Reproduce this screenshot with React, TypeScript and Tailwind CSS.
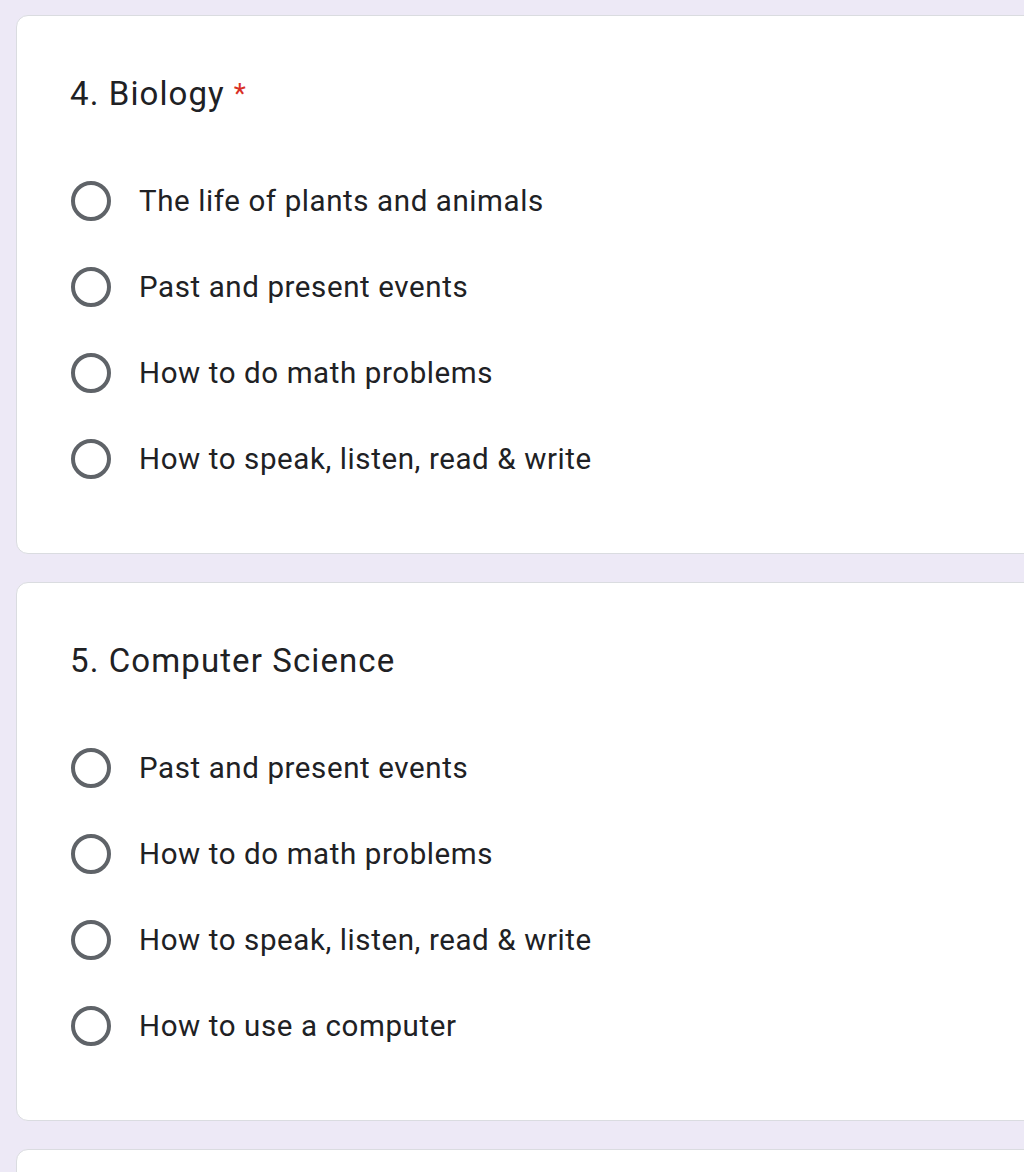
const questions = [
  {
    title: '4. Biology',
    required: true,
    options: [
      'The life of plants and animals',
      'Past and present events',
      'How to do math problems',
      'How to speak, listen, read & write',
    ],
  },
  {
    title: '5. Computer Science',
    required: false,
    options: [
      'Past and present events',
      'How to do math problems',
      'How to speak, listen, read & write',
      'How to use a computer',
    ],
  },
]

function Radio() {
  return (
    <span className="flex h-[42px] w-[42px] shrink-0 items-center justify-center">
      <span className="block h-[40px] w-[40px] rounded-full border-[4px] border-[#5f6368]" />
    </span>
  )
}

function QuestionCard({ title, required, options }: { title: string; required: boolean; options: string[] }) {
  return (
    <div className="-mr-4 ml-4 rounded-[12px] border border-[#dadce0] bg-white pb-[73px] pl-[53px] pt-[59px]">
      <div className="flex items-start text-[33px] leading-[38px] tracking-[1.1px] text-[#202124]">
        <span>{title}</span>
        {required && <span className="ml-[9px] text-[28px] text-[#d93025]">*</span>}
      </div>
      <div className="mt-[67px] flex flex-col gap-[44px]">
        {options.map((opt) => (
          <label key={opt} className="flex items-center gap-[27px]">
            <Radio />
            <span className="text-[29.5px] leading-[42px] tracking-[0.6px] text-[#202124]">{opt}</span>
          </label>
        ))}
      </div>
    </div>
  )
}

export default function App() {
  return (
    <div
      className="flex h-[1172px] flex-col gap-[28px] overflow-hidden bg-[#ede9f6] pt-[15px]"
      style={{ fontFamily: 'Roboto, "Liberation Sans", sans-serif' }}
    >
      {questions.map((q) => (
        <QuestionCard key={q.title} {...q} />
      ))}
      <div className="-mr-4 ml-4 h-[100px] shrink-0 rounded-[12px] border border-[#dadce0] bg-white" />
    </div>
  )
}
